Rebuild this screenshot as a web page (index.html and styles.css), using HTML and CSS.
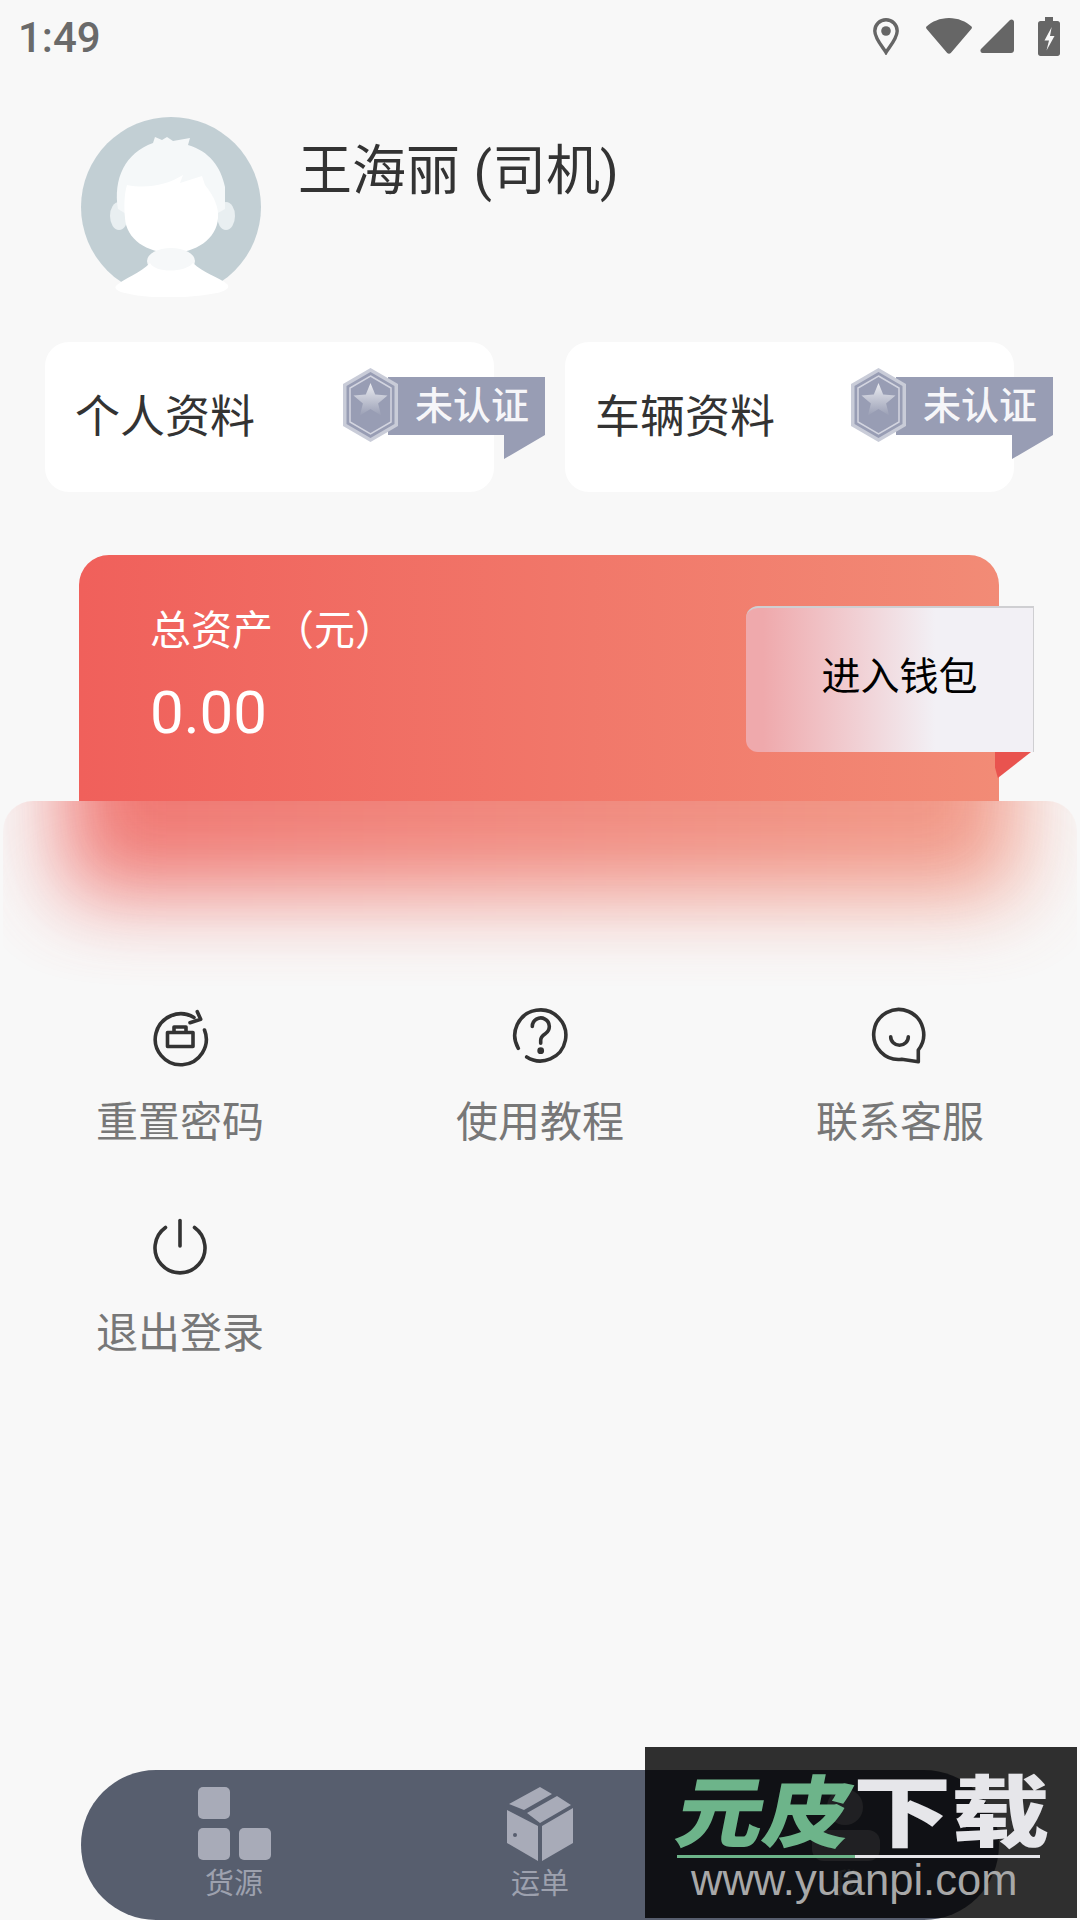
FILE: index.html
```html
<!DOCTYPE html>
<html lang="zh-CN">
<head>
  <meta charset="UTF-8">
  <meta name="viewport" content="width=device-width, initial-scale=1.0">
  <title>我的</title>
  <link rel="stylesheet" href="styles.css">
</head>
<body>
  <div class="page">
    <div class="status-bar">
      <span class="status-time">1:49</span>
      <div class="status-icons">
        <svg class="icon-pin" viewBox="0 0 26 37"><path d="M13 1.800C6.800 1.800 1.800 6.800 1.800 13c0 7.500 8.300 16.600 11.200 21.500C15.900 29.600 24.200 20.500 24.200 13 24.200 6.800 19.200 1.800 13 1.800z" fill="none" stroke="#666" stroke-width="3.400"/><circle cx="13" cy="13" r="4.800" fill="#666"/></svg>
        <svg class="icon-wifi" viewBox="0 0 46 36"><path d="M0.500 8.500C6 3.500 14 0 23 0s17 3.500 22.500 8.500c0.600 0.700 0.600 1.500 0 2.200L24.800 35c-1 1.100-2.600 1.100-3.600 0L0.500 10.700c-0.600-0.700-0.600-1.500 0-2.200z" fill="#666"/></svg>
        <svg class="icon-signal" viewBox="0 0 34 34"><path d="M30 1L1 30c-1.200 1.300-0.500 4 1.500 4H31c1.700 0 3-1.300 3-3V3c0-2.500-2.500-3.300-4-2z" fill="#666"/></svg>
        <svg class="icon-battery" viewBox="0 0 22 39"><path d="M7 0h8v4h4.500c1.400 0 2.500 1.100 2.500 2.500v30c0 1.400-1.100 2.500-2.500 2.500h-17C1.100 39 0 37.900 0 36.500v-30C0 5.100 1.100 4 2.500 4H7z" fill="#666"/><path d="M13.700 10L6.500 23.500h4.500L8.500 33.500l8-14.500h-4.500z" fill="#f8f8f8"/></svg>
      </div>
    </div>

    <div class="profile">
      <svg class="avatar" viewBox="0 0 180 180">
        <circle cx="90" cy="90" r="90" fill="#c2cfd4"/>
        <ellipse cx="38" cy="99" rx="9" ry="14" fill="#e9eff1"/>
        <ellipse cx="145" cy="99" rx="9" ry="14" fill="#e9eff1"/>
        <path d="M37 92C32 62 44 36 72 26L74 20 81 23 86 20 92 24 109 21 107 28C128 34 140 50 144 70V92L130 100H50z" fill="#f5f8f9"/>
        <path d="M46 68C66 72 86 68 102 58L99 66 121 59 124 68C134 80 138 92 137 101 136 122 114 136 91 136 66 136 45 122 44 101 43 90 43 78 46 68z" fill="#fff"/>
        <ellipse cx="90" cy="144" rx="24" ry="13" fill="#f6f8f9"/>
        <path d="M36 168C42 162 60 156 69 146 74 156 104 156 112 146 122 156 138 160 146 167 150 171 144 174 136 176 106 182 66 182 44 176 36 174 32 171 36 168z" fill="#fff"/>
      </svg>
      <div class="user-name">王海丽 (司机)</div>
    </div>

    <div class="cert-row">
      <div class="cert-card">
        <span>个人资料</span>
        <svg class="cert-badge" viewBox="0 0 202 92">
          <use href="#badge-shape"/>
          <text class="badge-text" x="72" y="51">未认证</text>
        </svg>
      </div>
      <div class="cert-card">
        <span>车辆资料</span>
        <svg class="cert-badge" viewBox="0 0 202 92">
          <defs>
            <linearGradient id="star-fill" x1="0" y1="0" x2="0" y2="1">
              <stop offset="0" stop-color="#ecedf2"/>
              <stop offset="1" stop-color="#9a9fb5"/>
            </linearGradient>
            <g id="badge-shape">
              <path d="M45 9H202V67L161 91V67H45z" fill="#989db4"/>
              <path d="M27.500 0L55 16V58L27.500 74 0 58V16z" fill="#c9ccd8"/>
              <path d="M27.500 4L51.500 18V56L27.500 70 3.500 56V18z" fill="#989db4"/>
              <path d="M27.500 8L48 20V54L27.500 66 7 54V20z" fill="none" stroke="#d3d5e0" stroke-width="1.500"/>
              <path d="M27.500 15l4.700 11.500 12.300 1-9.400 8 3 12-10.600-6.500-10.600 6.500 3-12-9.400-8 12.300-1z" fill="url(#star-fill)"/>
            </g>
          </defs>
          <use href="#badge-shape"/>
          <text class="badge-text" x="72" y="51">未认证</text>
        </svg>
      </div>
    </div>

    <div class="balance-card">
      <div class="balance-label">总资产（元）</div>
      <div class="balance-value">0.00</div>
      <div class="wallet-btn">进入钱包</div>
      <div class="wallet-fold"></div>
    </div>
    <div class="frost-panel"><div class="frost-glow"></div></div>

    <div class="menu-grid">
      <div class="menu-item">
        <svg class="menu-icon" viewBox="0 0 56 56">
          <path d="M52.500 22A25.500 25.500 0 1 1 42 9.500"/>
          <path d="M45.300 3.700L48.700 11.300 38 14.700"/>
          <rect x="15.500" y="24.500" width="25.500" height="14"/>
          <path d="M22 24V19H34V24"/>
        </svg>
        <span>重置密码</span>
      </div>
      <div class="menu-item">
        <svg class="menu-icon" viewBox="0 0 56 56">
          <path d="M14.700 49A25.500 25.500 0 1 0 6.300 40.300"/>
          <path d="M20.300 18.500a8.500 8.500 0 1 1 13 7.200c-3 2-4.600 3.500-4.600 6.500v3"/>
          <circle class="icon-dot" cx="28.700" cy="42.700" r="1.600"/>
        </svg>
        <span>使用教程</span>
      </div>
      <div class="menu-item">
        <svg class="menu-icon" viewBox="0 0 56 56">
          <path d="M46.300 42A25 25 0 1 0 29.700 51.300L46.300 53.700z"/>
          <path d="M18.700 28.700a8.800 8.500 0 0 0 17.600 0"/>
        </svg>
        <span>联系客服</span>
      </div>
      <div class="menu-item">
        <svg class="menu-icon" viewBox="0 0 56 56">
          <path d="M28 1.500V27"/>
          <path d="M13.500 8.500A25 25 0 1 0 42.500 8.500"/>
        </svg>
        <span>退出登录</span>
      </div>
    </div>

    <div class="tab-bar">
      <div class="tab-item">
        <div class="tab-blocks">
          <i></i><i class="blank"></i><i></i><i></i>
        </div>
        <span>货源</span>
      </div>
      <div class="tab-item">
        <svg class="tab-icon" viewBox="0 0 66 74">
          <path d="M33 0L45 7 17 23 2 17zM50 9L64 18 33 36 20 26zM0 23L31 39V74L0 56zM35 39L66 21V56L35 74z" fill="#a8abb8"/>
          <circle cx="8" cy="48" r="2" fill="#575e6e"/>
        </svg>
        <span>运单</span>
      </div>
      <div class="tab-item">
        <svg class="tab-icon" viewBox="0 0 68 74">
          <circle cx="33" cy="20" r="18" fill="#a8abb8"/>
          <rect x="0" y="43" width="68" height="31" rx="12" fill="#a8abb8"/>
        </svg>
        <span>我</span>
      </div>
    </div>

    <div class="watermark">
      <div class="logo-text"><span class="logo-green">元皮</span><span class="logo-white">下载</span></div>
      <div class="logo-line"></div>
      <div class="logo-url">www.yuanpi.com</div>
    </div>
  </div>
</body>
</html>
```

FILE: styles.css
```css
* {
  margin: 0;
  padding: 0;
  box-sizing: border-box;
}

body {
  font-family: Roboto, "Noto Sans CJK SC", sans-serif;
  background-color: #f8f8f8;
  color: #333;
}

.page {
  position: relative;
  display: flex;
  flex-direction: column;
  width: 1080px;
  height: 1920px;
  overflow: hidden;
}

/* status bar */
.status-bar {
  display: flex;
  justify-content: space-between;
  align-items: center;
  height: 72px;
  padding: 0 20px;
}

.status-time {
  margin: 2px 0 0 -2px;
  font-size: 42px;
  font-weight: 500;
  color: #6a6a6a;
}

.status-icons {
  display: flex;
  align-items: center;
}

.icon-pin {
  width: 26px;
  height: 37px;
  margin-right: 27px;
}

.icon-wifi {
  width: 46px;
  height: 36px;
  margin-right: 8px;
}

.icon-signal {
  width: 34px;
  height: 34px;
  margin-right: 24px;
}

.icon-battery {
  width: 22px;
  height: 39px;
}

/* profile */
.profile {
  display: flex;
  gap: 37px;
  height: 270px;
  padding: 45px 0 0 81px;
}

.avatar {
  flex: none;
  width: 180px;
  height: 180px;
}

.user-name {
  margin-top: 20px;
  font-size: 54px;
  line-height: 70px;
}

/* certification cards */
.cert-row {
  display: flex;
  gap: 71px;
  padding-left: 45px;
}

.cert-card {
  position: relative;
  display: flex;
  align-items: center;
  width: 449px;
  height: 150px;
  padding: 0 0 7px 30px;
  background: #fff;
  border-radius: 24px;
  font-size: 45px;
}

.cert-badge {
  position: absolute;
  top: 26px;
  right: -51px;
  width: 202px;
  height: 92px;
}

.cert-card + .cert-card .cert-badge {
  right: -39px;
}

.badge-text {
  font-size: 38px;
  font-weight: 500;
  fill: #f6f6f9;
}

/* balance */
.balance-card {
  position: relative;
  width: 920px;
  height: 246px;
  margin: 63px 0 0 79px;
  padding: 48px 0 0 71px;
  background: linear-gradient(90deg, #f0605b, #f28b76);
  border-radius: 30px 30px 0 0;
  color: #fff;
}

.balance-label {
  font-size: 41px;
  line-height: 56px;
}

.balance-value {
  margin-top: 19px;
  font-size: 60px;
  line-height: 70px;
}

.wallet-btn {
  position: absolute;
  top: 51px;
  right: -35px;
  display: flex;
  justify-content: center;
  align-items: center;
  width: 288px;
  height: 146px;
  padding: 0 0 14px 20px;
  background: linear-gradient(90deg, #efa9ac 6%, #f2f0f5 66%);
  border-top: 2px solid #cfcfd2;
  border-right: 1px solid #cfcfd2;
  border-radius: 12px 0 0 12px;
  color: #000;
  font-size: 39px;
}

.wallet-fold {
  position: absolute;
  top: 197px;
  left: 916px;
  width: 36px;
  height: 26px;
  background: #e9534f;
  clip-path: polygon(0 0, 100% 0, 8% 100%, 0 60%);
}

.frost-panel {
  position: relative;
  height: 190px;
  margin: 0 3px;
  overflow: hidden;
  border-radius: 30px 30px 0 0;
}

.frost-glow {
  position: absolute;
  top: -200px;
  left: 62px;
  right: 62px;
  height: 292px;
  background: linear-gradient(90deg, #ee5f5a, #f08a75);
  opacity: 0.85;
  filter: blur(42px);
}

/* menu */
.menu-grid {
  display: grid;
  grid-template-columns: repeat(3, 360px);
  row-gap: 66px;
  margin-top: 17px;
}

.menu-item {
  display: flex;
  flex-direction: column;
  align-items: center;
  gap: 29px;
  font-size: 42px;
  line-height: 60px;
  color: #777;
}

.menu-icon {
  width: 56px;
  height: 56px;
  overflow: visible;
  fill: none;
  stroke: #333;
  stroke-width: 3.6;
  stroke-linecap: round;
  stroke-linejoin: round;
}

.icon-dot {
  fill: #333;
}

/* tab bar */
.tab-bar {
  display: grid;
  grid-template-columns: repeat(3, 306px);
  width: 918px;
  height: 150px;
  margin: auto 0 0 81px;
  padding-top: 17px;
  background: #575e6e;
  border-radius: 75px;
}

.tab-item {
  display: flex;
  flex-direction: column;
  align-items: center;
  gap: 5px;
  font-size: 29px;
  line-height: 36px;
  color: #9da1ae;
}

.tab-icon {
  height: 74px;
}

.tab-blocks {
  display: grid;
  grid-template-columns: 32px 32px;
  grid-auto-rows: 32px;
  gap: 9px;
  height: 74px;
}

.tab-blocks i {
  background: #a8abb8;
  border-radius: 5px;
}

.tab-blocks .blank {
  background: none;
}

/* watermark over the corner */
.watermark {
  position: absolute;
  top: 1747px;
  left: 645px;
  width: 432px;
  height: 171px;
  padding: 24px 0 0 30px;
  background: rgba(0, 0, 0, 0.81);
}

.logo-text {
  display: flex;
  height: 84px;
  font-family: "Noto Sans CJK SC", sans-serif;
  font-size: 78px;
  font-weight: 900;
  line-height: 72px;
  white-space: nowrap;
}

.logo-green {
  display: inline-block;
  width: 178px;
  color: #6db48a;
  transform: translateX(3px) scaleX(1.12) skewX(-10deg);
  transform-origin: left center;
}

.logo-white {
  display: inline-block;
  color: #e6e6ea;
  transform: scaleX(1.26);
  transform-origin: left center;
}

.logo-line {
  width: 363px;
  height: 3px;
  margin-left: 2px;
  background: linear-gradient(90deg, #6db48a 49%, #e6e6ea 49%);
}

.logo-url {
  margin: 0 0 0 16px;
  font-family: "Liberation Sans", Arial, sans-serif;
  font-size: 43.500px;
  line-height: 44px;
  color: #a8a8a8;
}
```
